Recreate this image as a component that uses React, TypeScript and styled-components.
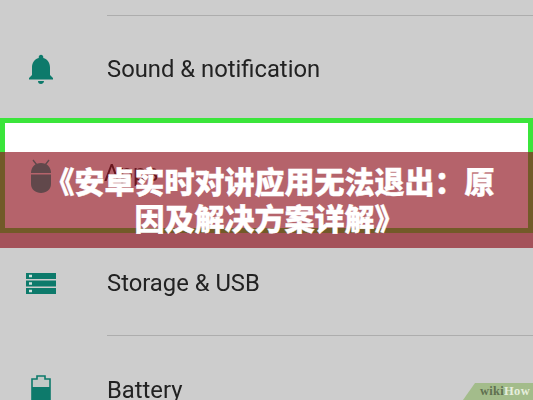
import React from "react"
import styled, { createGlobalStyle } from "styled-components"
import { MdNotifications } from "react-icons/md"

const GlobalStyle = createGlobalStyle`
  html, body {
    margin: 0;
    padding: 0;
    background: #cdcdcd;
  }
`

const Page = styled.div`
  position: relative;
  width: 533px;
  height: 400px;
  overflow: hidden;
  background: #cdcdcd;
  font-family: Roboto, "Liberation Sans", sans-serif;
`

const Settings = styled.div`
  display: flex;
  flex-direction: column;
  filter: blur(0.35px);
`

const Row = styled.div<{ $height: number; $pad?: number }>`
  display: flex;
  align-items: center;
  box-sizing: border-box;
  height: ${(p) => p.$height}px;
  padding-top: ${(p) => p.$pad ?? 0}px;
`

const Divider = styled.div<{ $top: number }>`
  height: 1px;
  margin-left: 107px;
  margin-top: ${(p) => p.$top}px;
  background: #adadad;
`

const Selected = styled.div`
  display: flex;
  align-items: flex-start;
  box-sizing: border-box;
  height: 115px;
  padding-top: 36px;
  background: #fff;
  border: 5px solid #3be53b;
`

const IconSlot = styled.div<{ $inset?: boolean }>`
  display: flex;
  justify-content: center;
  width: ${(p) => (p.$inset ? 72 : 82)}px;
  margin-right: ${(p) => (p.$inset ? 2 : 0)}px;
  flex-shrink: 0;
  color: #0d7a6b;
`

const Label = styled.div`
  margin-left: 25px;
  font-size: 23.8px;
  color: #222;
`

const Band = styled.div`
  position: absolute;
  left: 0;
  right: 0;
  top: 152px;
  height: 96px;
  box-sizing: border-box;
  padding: 0 0 2px 6px;
  display: flex;
  align-items: center;
  justify-content: center;
  background: rgba(143, 18, 31, 0.66);
`

const Title = styled.h1`
  margin: 0;
  width: 460px;
  text-align: center;
  font-family: "Noto Sans CJK SC", sans-serif;
  font-size: 30px;
  line-height: 37px;
  font-weight: 900;
  -webkit-text-stroke: 0.4px #fff;
  color: #fff;
`

const Badge = styled.div`
  position: absolute;
  right: 0;
  bottom: 0;
  width: 70px;
  height: 17px;
  padding-right: 3px;
  box-sizing: border-box;
  display: flex;
  align-items: center;
  justify-content: flex-end;
  background: #a3bc8b;
  clip-path: polygon(12px 0, 100% 0, 100% 100%, 0 100%);
  font-family: "Liberation Serif", serif;
  font-size: 12.5px;
  font-weight: 700;
  letter-spacing: 0.3px;
  color: #5f7050;
`

const BadgeHow = styled.span`
  color: #e6eedd;
`

const AndroidIcon = () => (
  <svg width="24" height="34" viewBox="0 0 24 34" fill="#0ab0a0">
    <path d="M4 1l3.500 4.500M20 1l-3.500 4.500" stroke="#0ab0a0" strokeWidth="1.4" />
    <path d="M2 14C2 8 6 4 12 4s10 4 10 10z" />
    <path d="M2 15.500h20V25c0 5.500-4.500 9-10 9S2 30.500 2 25z" />
  </svg>
)

const StorageIcon = () => (
  <svg width="30" height="21" viewBox="0 0 30 21" fill="#0d7a6b">
    <path d="M0 0h30v6H0z" />
    <path d="M0 7.500h30v6H0z" />
    <path d="M0 15h30v6H0z" />
    <path d="M3 1.800h3v2.400H3zM3 9.300h3v2.400H3zM3 16.800h3v2.400H3z" fill="#cfe2dd" />
  </svg>
)

const BatteryIcon = () => (
  <svg width="20" height="30" viewBox="0 0 20 30">
    <path d="M6 1h8v3h5v25H1V4h5z" fill="#c2c9c6" stroke="#0d7a6b" strokeWidth="1.6" />
    <path d="M1 12h18v18H1z" fill="#0d7a6b" />
  </svg>
)

export default function App() {
  return (
    <Page>
      <GlobalStyle />
      <Settings>
        <Divider $top={15} />
        <Row $height={102} $pad={4}>
          <IconSlot>
            <MdNotifications size={36} />
          </IconSlot>
          <Label>Sound &amp; notification</Label>
        </Row>
        <Selected>
          <IconSlot $inset>
            <AndroidIcon />
          </IconSlot>
          <Label>Apps</Label>
        </Selected>
        <Row $height={100}>
          <IconSlot>
            <StorageIcon />
          </IconSlot>
          <Label>Storage &amp; USB</Label>
        </Row>
        <Divider $top={2} />
        <Row $height={108}>
          <IconSlot>
            <BatteryIcon />
          </IconSlot>
          <Label>Battery</Label>
        </Row>
      </Settings>
      <Band>
        <Title>《安卓实时对讲应用无法退出：原因及解决方案详解》</Title>
      </Band>
      <Badge>
        wiki<BadgeHow>How</BadgeHow>
      </Badge>
    </Page>
  )
}
